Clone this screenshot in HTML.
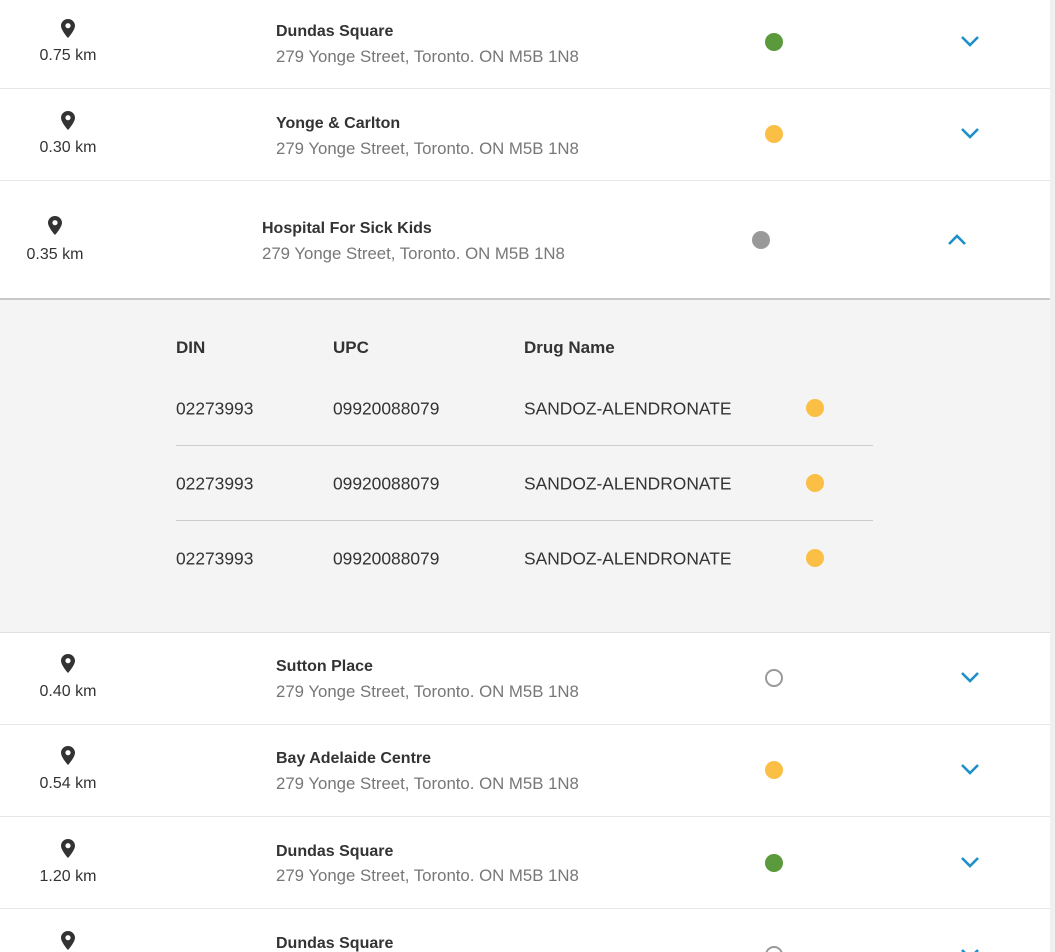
<!DOCTYPE html>
<html><head><meta charset="utf-8"><style>
*{margin:0;padding:0;box-sizing:border-box}
html,body{width:1055px;height:952px;overflow:hidden}
body{background:#fff;font-family:"Liberation Sans",sans-serif;position:relative}
.edge{position:absolute;left:1050px;top:0;width:5px;height:952px;background:#f0f0f0}
.row{position:absolute;left:0;width:1050px;height:92px}
.sep{position:absolute;left:0;width:1050px;height:1px;background:#e6e6e6}
.pin{position:absolute;width:14px;height:19px}
.dist{position:absolute;width:100px;text-align:center;font-size:16px;color:#333;transform:translateY(-50%)}
.nm{position:absolute;font-size:16px;font-weight:bold;color:#333;transform:translateY(-50%)}
.ad{position:absolute;font-size:16.8px;color:#777;transform:translateY(-50%)}
.dot{position:absolute;width:18px;height:18px;border-radius:50%}
.g{background:#5a9a3c}.y{background:#fbbf45}.k{background:#999}.o{border:2px solid #999;background:#fff}
.chev{position:absolute;width:20px;height:12px}
.t{position:absolute;font-size:17.4px;color:#333;transform:translateY(-50%)}
.th{font-weight:bold;font-size:17px}
</style></head><body>
<div class="edge"></div>

<svg width="0" height="0" style="position:absolute"><defs>
<symbol id="p" viewBox="0 0 14 19"><path d="M7 0C3.1 0 0 3 0 6.8 0 11.5 7 19 7 19s7-7.5 7-12.2C14 3 10.9 0 7 0zm0 9.3A2.6 2.6 0 1 1 7 4.1a2.6 2.6 0 0 1 0 5.2z" fill="#333"/></symbol>
<symbol id="d" viewBox="0 0 20 12"><path d="M2 2l8 8 8-8" fill="none" stroke="#1e90c8" stroke-width="2.6"/></symbol>
<symbol id="u" viewBox="0 0 20 12"><path d="M2 10l8-8 8 8" fill="none" stroke="#1e90c8" stroke-width="2.6"/></symbol>
</defs></svg>

<div class="row" style="top:0">
<svg class="pin" style="left:61px;top:19px"><use href="#p"/></svg>
<div class="dist" style="left:18px;top:56px">0.75 km</div>
<div class="nm" style="left:276px;top:32px">Dundas Square</div>
<div class="ad" style="left:276px;top:57px">279 Yonge Street, Toronto. ON M5B 1N8</div>
<div class="dot g" style="left:765px;top:33px"></div>
<svg class="chev" style="left:960px;top:35px"><use href="#d"/></svg>
</div>
<div class="sep" style="top:88px"></div>

<div class="row" style="top:92px">
<svg class="pin" style="left:61px;top:19px"><use href="#p"/></svg>
<div class="dist" style="left:18px;top:56px">0.30 km</div>
<div class="nm" style="left:276px;top:32px">Yonge &amp; Carlton</div>
<div class="ad" style="left:276px;top:57px">279 Yonge Street, Toronto. ON M5B 1N8</div>
<div class="dot y" style="left:765px;top:33px"></div>
<svg class="chev" style="left:960px;top:35px"><use href="#d"/></svg>
</div>
<div class="sep" style="top:180px"></div>

<div style="position:absolute;left:0;top:181px;width:1050px;height:117px;background:#fff"></div>
<div style="position:absolute;left:0;top:298px;width:1050px;height:2px;background:#c8c8c8"></div>
<div style="position:absolute;left:0;top:300px;width:1050px;height:332px;background:#f4f4f4"></div>
<div class="row" style="top:197px">
<svg class="pin" style="left:48px;top:19px"><use href="#p"/></svg>
<div class="dist" style="left:5px;top:58px">0.35 km</div>
<div class="nm" style="left:262px;top:32px">Hospital For Sick Kids</div>
<div class="ad" style="left:262px;top:57px">279 Yonge Street, Toronto. ON M5B 1N8</div>
<div class="dot k" style="left:752px;top:34px"></div>
<svg class="chev" style="left:947px;top:37px"><use href="#u"/></svg>
</div>

<div class="t th" style="left:176px;top:348px">DIN</div>
<div class="t th" style="left:333px;top:348px">UPC</div>
<div class="t th" style="left:524px;top:348px">Drug Name</div>

<div class="t" style="left:176px;top:409px">02273993</div>
<div class="t" style="left:333px;top:409px">09920088079</div>
<div class="t" style="left:524px;top:409px">SANDOZ-ALENDRONATE</div>
<div class="dot y" style="left:806px;top:399px"></div>
<div style="position:absolute;left:176px;top:445px;width:697px;height:1px;background:#ccc"></div>

<div class="t" style="left:176px;top:484px">02273993</div>
<div class="t" style="left:333px;top:484px">09920088079</div>
<div class="t" style="left:524px;top:484px">SANDOZ-ALENDRONATE</div>
<div class="dot y" style="left:806px;top:474px"></div>
<div style="position:absolute;left:176px;top:520px;width:697px;height:1px;background:#ccc"></div>

<div class="t" style="left:176px;top:559px">02273993</div>
<div class="t" style="left:333px;top:559px">09920088079</div>
<div class="t" style="left:524px;top:559px">SANDOZ-ALENDRONATE</div>
<div class="dot y" style="left:806px;top:549px"></div>
<div class="sep" style="top:632px;background:#e0e0e0"></div>

<div class="row" style="top:635px">
<svg class="pin" style="left:61px;top:19px"><use href="#p"/></svg>
<div class="dist" style="left:18px;top:57px">0.40 km</div>
<div class="nm" style="left:276px;top:32px">Sutton Place</div>
<div class="ad" style="left:276px;top:57px">279 Yonge Street, Toronto. ON M5B 1N8</div>
<div class="dot o" style="left:765px;top:34px"></div>
<svg class="chev" style="left:960px;top:36px"><use href="#d"/></svg>
</div>
<div class="sep" style="top:724px"></div>

<div class="row" style="top:727px">
<svg class="pin" style="left:61px;top:19px"><use href="#p"/></svg>
<div class="dist" style="left:18px;top:57px">0.54 km</div>
<div class="nm" style="left:276px;top:32px">Bay Adelaide Centre</div>
<div class="ad" style="left:276px;top:57px">279 Yonge Street, Toronto. ON M5B 1N8</div>
<div class="dot y" style="left:765px;top:34px"></div>
<svg class="chev" style="left:960px;top:36px"><use href="#d"/></svg>
</div>
<div class="sep" style="top:816px"></div>

<div class="row" style="top:820px">
<svg class="pin" style="left:61px;top:19px"><use href="#p"/></svg>
<div class="dist" style="left:18px;top:57px">1.20 km</div>
<div class="nm" style="left:276px;top:32px">Dundas Square</div>
<div class="ad" style="left:276px;top:56px">279 Yonge Street, Toronto. ON M5B 1N8</div>
<div class="dot g" style="left:765px;top:34px"></div>
<svg class="chev" style="left:960px;top:36px"><use href="#d"/></svg>
</div>
<div class="sep" style="top:908px"></div>

<div class="row" style="top:912px;height:40px;overflow:hidden">
<svg class="pin" style="left:61px;top:19px"><use href="#p"/></svg>
<div class="nm" style="left:276px;top:32px">Dundas Square</div>
<div class="dot o" style="left:765px;top:34px"></div>
<svg class="chev" style="left:960px;top:36px"><use href="#d"/></svg>
</div>
</body></html>
